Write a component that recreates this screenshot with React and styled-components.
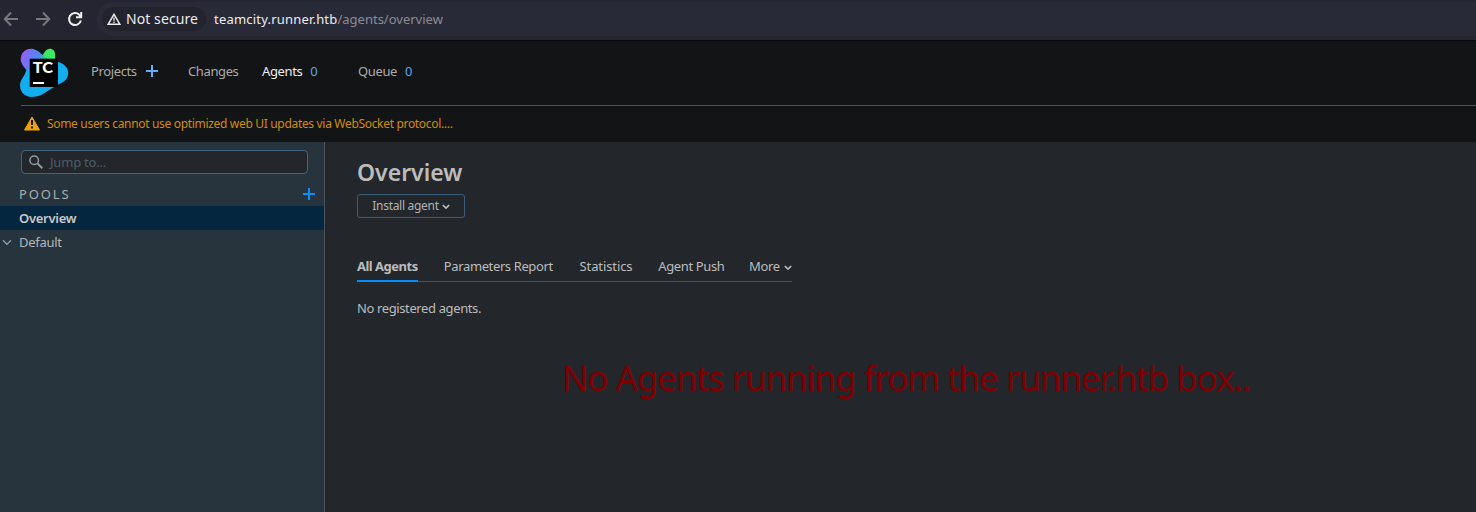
import React from "react";
import styled, { createGlobalStyle } from "styled-components";

const Global = createGlobalStyle`
  * { box-sizing: border-box; }
  html, body { margin: 0; height: 512px; overflow: hidden; }
  body { background: #23272b; color: #bcbcbc; font-family: "Noto Sans", sans-serif; font-size: 13px; line-height: 20px; letter-spacing: -0.38px; }
`;

const Page = styled.div`
  display: flex;
  flex-direction: column;
  width: 1476px;
  height: 512px;
`;

const BrowserBar = styled.div`
  display: flex;
  align-items: flex-start;
  height: 41px;
  padding-top: 2px;
  background: #242530;
  border-bottom: 1px solid #08090a;
`;

const BrowserButton = styled.svg`
  width: 16px;
  height: 16px;
  flex: none;
  margin: 9px 16px 0 0;
  fill: none;
  stroke: ${(p) => (p.$active ? "#eeeeee" : "#77787d")};
  stroke-width: 2;
`;

const BrowserNav = styled.div`
  display: flex;
  width: 97px;
  padding-left: 3px;
`;

const AddressBar = styled.div`
  display: flex;
  align-items: center;
  flex: 1;
  height: 34px;
  padding-left: 5px;
  background: #292a37;
  border-radius: 17px 0 0 17px;
`;

const SecurityChip = styled.div`
  display: flex;
  align-items: center;
  width: 104px;
  height: 24px;
  padding-left: 5px;
  border-radius: 12px;
  background: #22232d;
  color: #ececee;
  font-size: 14px;
  letter-spacing: 0.08px;
  white-space: nowrap;
  svg { margin-right: 5px; }
`;

const Url = styled.div`
  margin-left: 8px;
  font-size: 13px;
  letter-spacing: 0;
  color: #8b8c93;
  b { font-weight: 400; color: #ececee; letter-spacing: 0.2px; }
`;

const Header = styled.header`
  height: 101px;
  background: #131416;
`;

const HeaderNav = styled.nav`
  display: flex;
  align-items: center;
  height: 65px;
  margin-left: 21px;
  padding-bottom: 4px;
  border-bottom: 1px solid #4a5257;
`;

const Logo = styled.svg`
  flex: none;
  width: 50px;
  height: 50px;
  margin: 3px 22px 0 -2px;
  text { font-family: Lato, sans-serif; font-weight: 900; font-size: 15.5px; letter-spacing: 0; fill: #fff; }
`;

const NavItem = styled.span`
  display: flex;
  align-items: center;
  width: ${(p) => p.$width};
  color: ${(p) => (p.$active ? "#eeeeee" : "#ababab")};
  white-space: nowrap;
  svg { margin-left: 9px; }
`;

const Count = styled.span`
  margin-left: 8px;
  color: #5ca5ef;
`;

const Notice = styled.div`
  display: flex;
  align-items: center;
  height: 36px;
  padding-left: 24px;
  color: #d18d06;
  font-size: 12px;
  letter-spacing: -0.32px;
  svg { margin: -2px 6px 0 0; }
`;

const Body = styled.div`
  display: flex;
  flex: 1;
`;

const Sidebar = styled.aside`
  width: 325px;
  padding-top: 8px;
  background: #28343d;
  border-right: 1px solid #48545c;
`;

const Search = styled.div`
  display: flex;
  align-items: center;
  width: 287px;
  height: 24px;
  margin: 0 0 8px 21px;
  padding-left: 7px;
  border: 1px solid #406382;
  border-radius: 4px;
  background: #23272b;
  color: #4e5c66;
  letter-spacing: -0.2px;
  svg { margin-right: 7px; }
`;

const PoolsHeading = styled.div`
  display: flex;
  align-items: center;
  justify-content: space-between;
  height: 24px;
  padding: 0 9px 0 19px;
  color: #a9adb0;
  letter-spacing: 1.9px;
`;

const PoolRow = styled.div`
  display: flex;
  align-items: center;
  height: 24px;
  padding-left: 2px;
  background: ${(p) => (p.$selected ? "#05263f" : "transparent")};
  font-weight: ${(p) => (p.$selected ? 600 : 400)};
  letter-spacing: -0.28px;
  color: ${(p) => (p.$selected ? "#c8c9ca" : "#b3b6b8")};
`;

const RowIcon = styled.span`
  display: flex;
  width: 17px;
`;

const Main = styled.main`
  flex: 1;
  padding: 16px 0 0 32px;
`;

const Title = styled.h1`
  margin: 0;
  height: 36px;
  font-size: 23px;
  line-height: 29px;
  font-weight: 600;
  letter-spacing: 0;
`;

const InstallButton = styled.button`
  display: flex;
  align-items: center;
  justify-content: center;
  width: 108px;
  height: 24px;
  padding: 0 0 1px;
  border: 1px solid #3b5d79;
  border-radius: 3px;
  background: transparent;
  color: #b1b2b3;
  font: 12px "Noto Sans", sans-serif;
  letter-spacing: -0.3px;
  svg { margin: 2px 0 0 3px; }
`;

const Tabs = styled.div`
  display: flex;
  width: 435px;
  height: 28px;
  margin-top: 36px;
  border-bottom: 1px solid #435158;
`;

const Tab = styled.div`
  height: 28px;
  line-height: 24px;
  width: ${(p) => p.$width};
  margin-right: ${(p) => p.$gap || "0"};
  border-bottom: ${(p) => (p.$active ? "2px solid #008eff" : "0")};
  font-weight: ${(p) => (p.$active ? 700 : 400)};
  letter-spacing: ${(p) => p.$spacing || "-0.38px"};
  white-space: nowrap;
  svg { margin-left: 4px; }
`;

const Empty = styled.p`
  margin: 16px 0 0;
`;

const Annotation = styled.div`
  margin: 36px 0 0 205px;
  color: #7d0003;
  font-size: 35px;
  line-height: 48px;
  letter-spacing: -1.08px;
  white-space: nowrap;
`;

const Plus = ({ color }) => (
  <svg width="12" height="12" viewBox="0 0 12 12">
    <path d="M6 0V12M0 6H12" stroke={color} strokeWidth="2" />
  </svg>
);

const Chevron = ({ size = 8, color = "#bcbcbc", weight = 1.6 }) => (
  <svg width={size} height={size * 0.7} viewBox="0 0 10 7" fill="none">
    <path d="M1 1.2L5 5.2L9 1.2" stroke={color} strokeWidth={(weight * 10) / size} />
  </svg>
);

export default function App() {
  return (
    <Page>
      <Global />
      <BrowserBar>
        <BrowserNav>
          <BrowserButton viewBox="0 0 16 16"><path d="M15 8H2M8 1.5L1.8 8L8 14.5" /></BrowserButton>
          <BrowserButton viewBox="0 0 16 16"><path d="M1 8H14M8 1.5L14.2 8L8 14.5" /></BrowserButton>
          <BrowserButton $active viewBox="0 0 16 16">
            <path d="M13.9 9.5A6 6 0 1 1 12.3 3.8L14 5.5" />
            <path d="M14.2 1V6.2H9" />
          </BrowserButton>
        </BrowserNav>
        <AddressBar>
          <SecurityChip>
            <svg width="14" height="12" viewBox="0 0 14 12">
              <path d="M7 1.3L12.8 11.2H1.2Z" fill="none" stroke="#ececee" strokeWidth="1.5" />
              <path d="M7 4.5V7.7M7 8.6V10" stroke="#ececee" strokeWidth="1.3" />
            </svg>
            Not secure
          </SecurityChip>
          <Url><b>teamcity.runner.htb</b>/agents/overview</Url>
        </AddressBar>
      </BrowserBar>
      <Header>
        <HeaderNav>
          <Logo viewBox="0 0 50 50">
            <defs>
              <linearGradient id="violet" x1="0" y1="0.3" x2="1" y2="0.6">
                <stop offset="0" stopColor="#975cf8" />
                <stop offset="0.6" stopColor="#478ff5" />
                <stop offset="1" stopColor="#12b2ef" />
              </linearGradient>
              <linearGradient id="green" x1="1" y1="0" x2="0" y2="1">
                <stop offset="0.5" stopColor="#3bea62" />
                <stop offset="1" stopColor="#2388dc" />
              </linearGradient>
            </defs>
            <path d="M37 13.5C44 14.5 49.2 19 49.2 25C49.2 30.5 45.5 34 39 36.5L20 47L12 36L20 14Z" fill="#12aef0" />
            <path d="M1.7 11.5C1.7 5 6 0.8 12 0.8C15.5 0.8 18 2.5 21 4.7L30 12L18 28L7.5 22C4 18 1.7 15 1.7 11.5Z" fill="url(#violet)" />
            <path d="M20.5 11.5L26 3.5C27.5 1.6 29 0.8 30.8 0.8C34 0.8 36 3.2 36 6.2V14H20.5Z" fill="url(#green)" />
            <path d="M7.3 21.5L20 20L39 36.5L24 46C20 48.2 16 49 12.5 49C6 49 1 44 1 37.5C1 31 7 27 7.3 21.5Z" fill="#12aef0" />
            <path d="M10.7 10.7H39V39H10.7Z" fill="#000" />
            <text x="13.7" y="25" textLength="20.3" lengthAdjust="spacingAndGlyphs">TC</text>
            <path d="M14 34H25V36H14Z" fill="#fff" />
          </Logo>
          <NavItem $width="97px">Projects<Plus color="#66adf5" /></NavItem>
          <NavItem $width="74px">Changes</NavItem>
          <NavItem $width="96px" $active>Agents<Count>0</Count></NavItem>
          <NavItem $width="60px">Queue<Count>0</Count></NavItem>
        </HeaderNav>
        <Notice>
          <svg width="17" height="15" viewBox="0 0 17 15">
            <path d="M8 1L15.5 14H0.5Z" fill="#efa108" stroke="#efa108" strokeLinejoin="round" />
            <path d="M8 4V9M8 10.5V12.5" stroke="#131416" strokeWidth="2" />
          </svg>
          Some users cannot use optimized web UI updates via WebSocket protocol....
        </Notice>
      </Header>
      <Body>
        <Sidebar>
          <Search>
            <svg width="14" height="14" viewBox="0 0 14 14" fill="none" stroke="#8e9ba5">
              <circle cx="5.2" cy="5.2" r="4.3" strokeWidth="1.5" />
              <path d="M8.4 8.4L13.3 13.3" strokeWidth="2" />
            </svg>
            Jump to...
          </Search>
          <PoolsHeading>POOLS<Plus color="#0b8dfc" /></PoolsHeading>
          <PoolRow $selected><RowIcon />Overview</PoolRow>
          <PoolRow><RowIcon><Chevron size={10} color="#839cac" weight={1.4} /></RowIcon>Default</PoolRow>
        </Sidebar>
        <Main>
          <Title>Overview</Title>
          <InstallButton>Install agent<Chevron /></InstallButton>
          <Tabs>
            <Tab $active $width="61px" $gap="26px" $spacing="-0.5px">All Agents</Tab>
            <Tab $width="136px">Parameters Report</Tab>
            <Tab $width="79px" $spacing="-0.1px">Statistics</Tab>
            <Tab $width="91px">Agent Push</Tab>
            <Tab $width="43px">More<Chevron /></Tab>
          </Tabs>
          <Empty>No registered agents.</Empty>
          <Annotation>No Agents running from the runner.htb box..</Annotation>
        </Main>
      </Body>
    </Page>
  );
}
